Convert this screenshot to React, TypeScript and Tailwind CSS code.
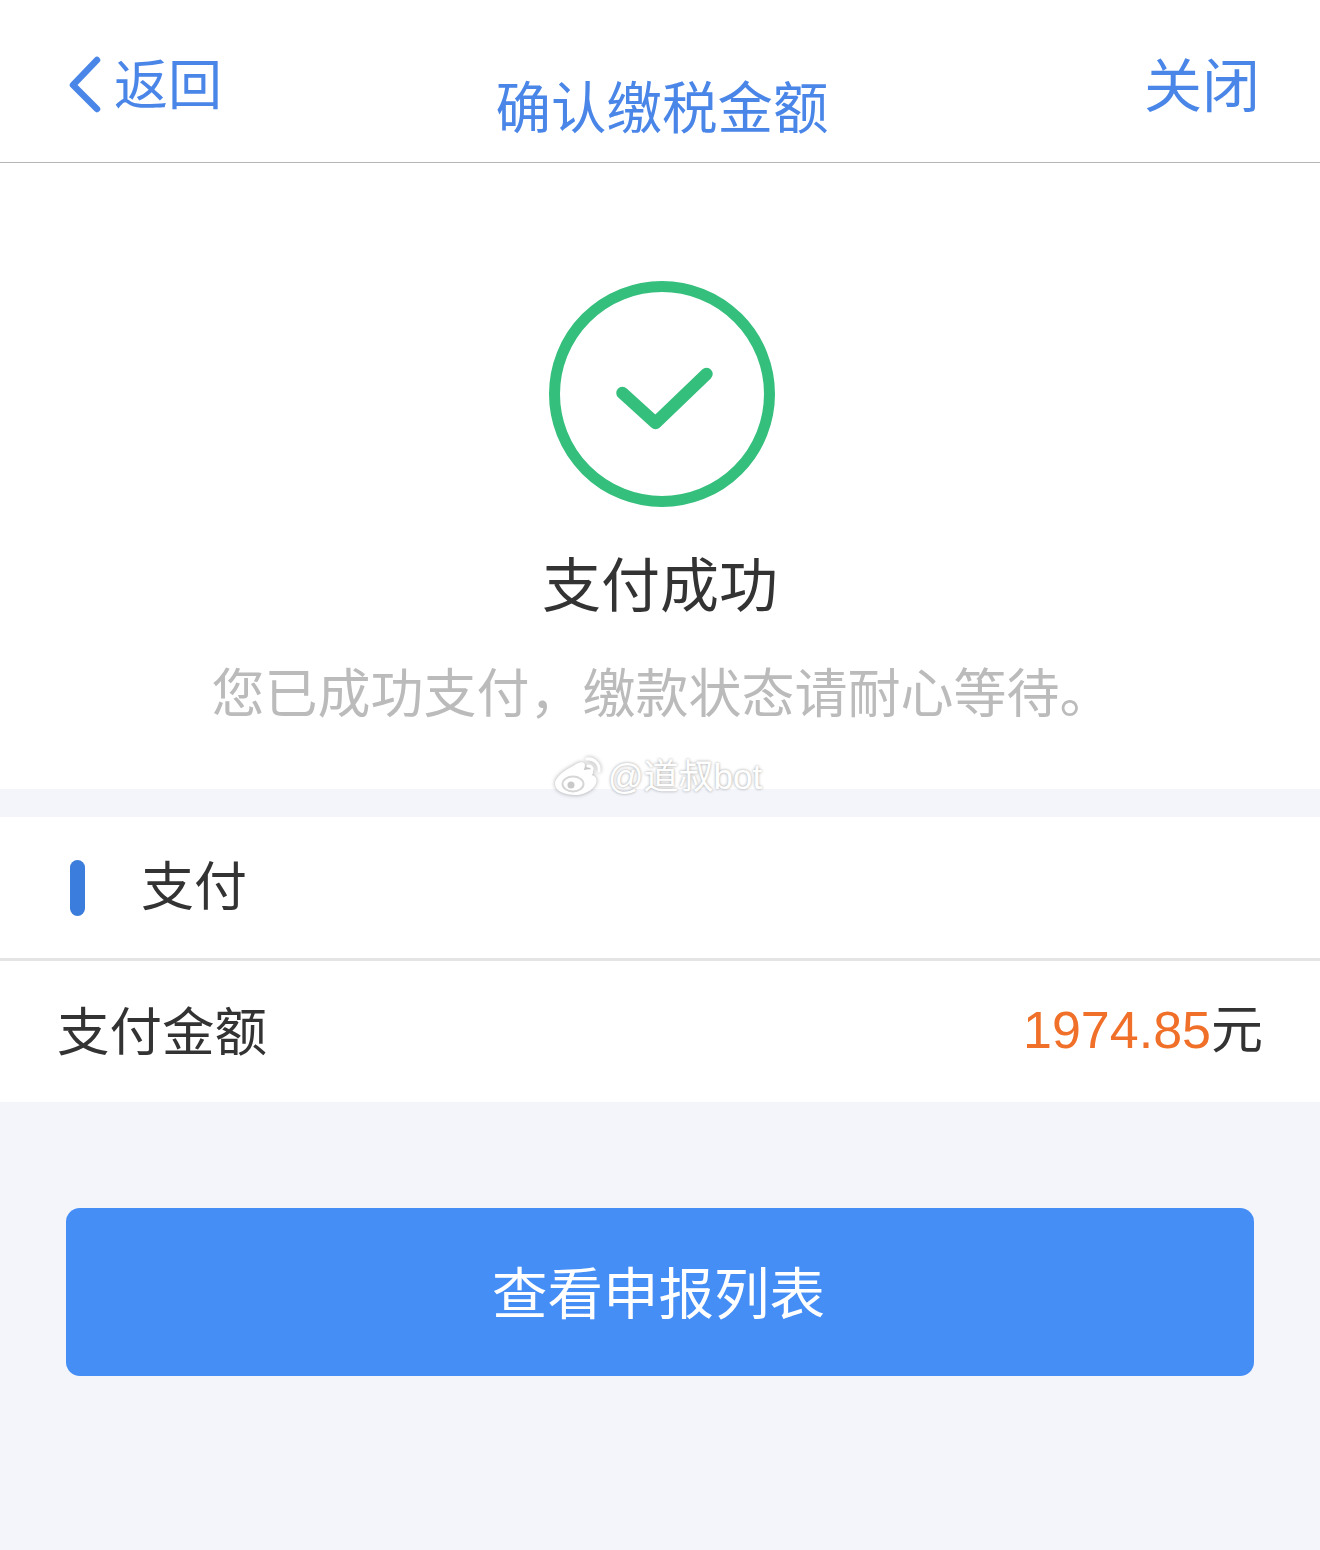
import React from "react";

const WeiboLogo: React.FC = () => (
  <svg width="50" height="44" viewBox="0 0 50 44" fill="none" className="shrink-0 [filter:drop-shadow(0_0_2px_rgba(0,0,0,0.35))]">
    <path
      d="M19 11c4-3 9-5 11-3 1.500 1.500 1 4 0 7 3-1 7-1.500 8.500.5 1 1.500.5 3-.5 4.500 3 1 4.500 3 4.500 5.500 0 7-10 14.500-21 14.500C10 40 1 36 1 28.500 1 23 9 16 19 11z"
      fill="#ffffff"
    />
    <ellipse cx="19" cy="29" rx="10.500" ry="7.500" fill="#ffffff" stroke="#d6d6d6" strokeWidth="2" />
    <circle cx="17" cy="30" r="3.500" fill="#c9c9c9" />
    <path d="M33 4c7-1 13 5 12 12" stroke="#ffffff" strokeWidth="3" strokeLinecap="round" />
    <path d="M34 11c2.500-.5 4.500 1.500 4 4" stroke="#ffffff" strokeWidth="3" strokeLinecap="round" />
  </svg>
);

const App: React.FC = () => {
  return (
    <div className="relative w-full min-h-[1550px] bg-[#f3f5fa] font-['Noto_Sans_CJK_SC','Liberation_Sans',sans-serif]">
      {/* Header */}
      <header className="h-[163px] bg-white border-b border-[#b5b5b5] grid grid-cols-[1fr_auto_1fr] px-[66px]">
        <div className="flex items-start gap-[12px] text-[54px] leading-none text-[#4a86e8]">
          <svg width="36" height="60" viewBox="0 0 36 60" fill="none" className="shrink-0 mt-[55px]">
            <path d="M31 5L7 30l24 24" stroke="#4a86e8" strokeWidth="6.500" strokeLinecap="round" strokeLinejoin="round" />
          </svg>
          <span className="pt-[55px]">返回</span>
        </div>
        <h1 className="ml-[4px] pt-[76px] text-[55.500px] leading-[56px] font-normal text-[#4a86e8] whitespace-nowrap">确认缴税金额</h1>
        <div className="justify-self-end -mr-[6px] pt-[54px] text-[58px] leading-[56px] text-[#4a86e8]">关闭</div>
      </header>

      {/* Result */}
      <section className="h-[626px] bg-white flex flex-col items-center pt-[118px]">
        <svg width="226" height="226" viewBox="0 0 226 226" fill="none" className="shrink-0 ml-[3px]">
          <circle cx="113" cy="113" r="107.500" stroke="#35bf7c" strokeWidth="11" />
          <path d="M73.500 112l33 30 51-49" stroke="#35bf7c" strokeWidth="12.500" strokeLinecap="round" strokeLinejoin="round" />
        </svg>
        <h2 className="mt-[45px] text-[59px] leading-[60px] font-normal text-[#333333]">支付成功</h2>
        <p className="mt-[51px] text-[53px] leading-[54px] text-[#bbbbbb] whitespace-nowrap pl-[4px]">
          您已成功支付，缴款状态请耐心等待。
        </p>
      </section>

      {/* Pay card */}
      <section className="mt-[28px] bg-white">
        <div className="h-[141px] flex items-center pl-[70px] gap-[56px]">
          <span className="w-[15px] h-[56px] rounded-full bg-[#3b7ddd]" />
          <span className="pb-[7px] text-[53px] text-[#333333]">支付</span>
        </div>
        <div className="h-[3px] bg-[#e4e4e4]" />
        <div className="h-[141px] flex items-center justify-between px-[57px]">
          <span className="pb-[7px] text-[52.500px] text-[#333333]">支付金额</span>
          <span className="pb-[7px] text-[52px] text-[#333333]">
            <span className="font-['Liberation_Sans',sans-serif] text-[#f0702a]">1974.85</span>元
          </span>
        </div>
      </section>

      {/* Action */}
      <div className="px-[66px] pt-[106px]">
        <button className="w-full h-[168px] rounded-[14px] bg-[#448ef6] text-white text-[55.500px] pb-[2px] pr-[3px]">查看申报列表</button>
      </div>

      {/* Watermark */}
      <div className="absolute left-[554px] top-[755px] flex items-center gap-[4px]">
        <WeiboLogo />
        <span className="text-[35px] leading-[44px] text-white whitespace-nowrap font-['Liberation_Sans','Noto_Sans_CJK_SC',sans-serif] [text-shadow:0_0_3px_rgba(0,0,0,0.4)]">
          @道叔bot
        </span>
      </div>
    </div>
  );
};

export default App;
